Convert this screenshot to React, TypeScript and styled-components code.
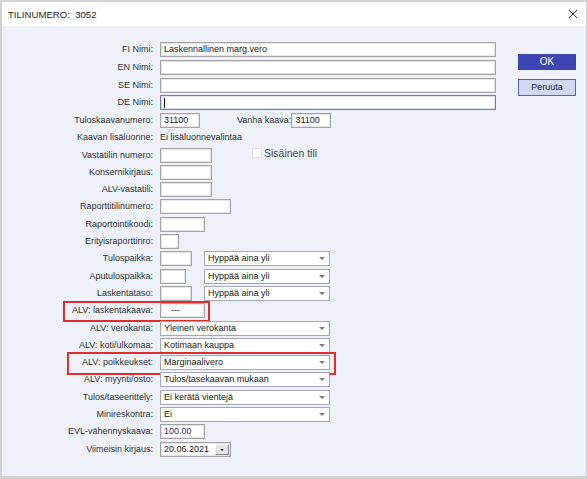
import React from 'react';
import styled, { createGlobalStyle } from 'styled-components';

const GlobalStyle = createGlobalStyle`
  html, body {
    margin: 0;
    padding: 0;
    background: #d2d2d2;
  }
  body {
    font-family: "Liberation Sans", Arial, sans-serif;
  }
`;

const Window = styled.div`
  margin: 2px 0 0 2px;
  width: 584px;
  height: 474px;
  background: #eef1fa;
  display: flex;
  flex-direction: column;
  overflow: hidden;
`;

const TitleBar = styled.div`
  height: 24px;
  flex-shrink: 0;
  background: #ffffff;
  display: flex;
  align-items: center;
  justify-content: space-between;
  padding: 0 8px 0 6px;
  font-size: 9.6px;
  color: #1e1e1e;
`;

const Close = styled.svg`
  width: 10px;
  height: 10px;
`;

const Content = styled.div`
  display: flex;
  align-items: flex-start;
  padding-top: 16px;
`;

const Form = styled.div`
  width: 500px;
  display: flex;
  flex-direction: column;
`;

const Row = styled.div<{ $tall?: boolean }>`
  position: relative;
  display: flex;
  align-items: flex-start;
  height: ${({ $tall }) => ($tall ? 17.75 : 17.3)}px;
`;

const Highlight = styled.div<{ $left: number; $top: number; $width: number; $height: number }>`
  position: absolute;
  left: ${({ $left }) => $left}px;
  top: ${({ $top }) => $top}px;
  width: ${({ $width }) => $width}px;
  height: ${({ $height }) => $height}px;
  border: 2px solid #e42a2a;
  box-sizing: border-box;
  pointer-events: none;
`;

const Label = styled.div`
  width: 151px;
  margin-right: 7px;
  flex-shrink: 0;
  text-align: right;
  font-size: 9px;
  line-height: 15px;
  color: #333;
  white-space: nowrap;
`;

const SideLabel = styled(Label)`
  width: auto;
  margin: 0 0 0 37px;
`;

const Text = styled.div`
  font-size: 9px;
  line-height: 15px;
  color: #2e2e2e;
  white-space: nowrap;
`;

const Field = styled.div<{ $w: number; $focus?: boolean; $pad?: number; $color?: string }>`
  position: relative;
  width: ${({ $w }) => $w}px;
  height: 15px;
  box-sizing: border-box;
  flex-shrink: 0;
  background: #fff;
  border: 1px solid ${({ $focus }) => ($focus ? '#7379b6' : '#a3a3a3')};
  box-shadow: inset 0 0 0 1px ${({ $focus }) => ($focus ? '#dfe2f4' : '#e6e6e6')};
  padding-left: ${({ $pad }) => $pad ?? 3}px;
  font-size: 9px;
  line-height: 13px;
  color: ${({ $color }) => $color ?? '#1a1a1a'};
  white-space: nowrap;
  overflow: hidden;
`;

const Caret = styled.span`
  position: absolute;
  left: 3px;
  top: 2px;
  width: 1px;
  height: 10px;
  background: #000;
`;

const Select = styled.div<{ $w: number; $gap?: number }>`
  position: relative;
  width: ${({ $w }) => $w}px;
  height: 15px;
  margin-left: ${({ $gap }) => $gap ?? 0}px;
  box-sizing: border-box;
  flex-shrink: 0;
  background: #fff;
  border: 1px solid #a4a6bd;
  padding-left: 3px;
  font-size: 9px;
  line-height: 13px;
  color: #1a1a1a;
  white-space: nowrap;

  &::after {
    content: '';
    position: absolute;
    right: 4px;
    top: 5px;
    border-left: 3.5px solid transparent;
    border-right: 3.5px solid transparent;
    border-top: 3.5px solid #7a7a7a;
  }
`;

const DateButton = styled.div`
  position: absolute;
  right: 1px;
  top: 1px;
  width: 14px;
  height: 11px;
  box-sizing: border-box;
  background: #e4e4e4;
  border: 1px solid;
  border-color: #f8f8f8 #8a8a8a #8a8a8a #f8f8f8;

  &::after {
    content: '';
    position: absolute;
    left: 4px;
    top: 4px;
    border-left: 2.5px solid transparent;
    border-right: 2.5px solid transparent;
    border-top: 2.5px solid #111;
  }
`;

const CheckLabel = styled.label`
  display: flex;
  align-items: center;
  gap: 2px;
  margin: -2px 0 0 40px;
  font-size: 10.5px;
  line-height: 14px;
  color: #4a4a55;
`;

const CheckBox = styled.span`
  width: 10px;
  height: 10px;
  box-sizing: border-box;
  background: #fff;
  border: 1px solid #e2e2e8;
`;

const Buttons = styled.div`
  margin: 12px 0 0 16px;
  display: flex;
  flex-direction: column;
  gap: 9px;
`;

const Button = styled.button<{ $primary?: boolean }>`
  width: 58px;
  height: ${({ $primary }) => ($primary ? 16 : 17)}px;
  padding: 0;
  font-family: "Liberation Sans", Arial, sans-serif;
  font-size: ${({ $primary }) => ($primary ? 10 : 9)}px;
  line-height: 1;
  border: 1px solid ${({ $primary }) => ($primary ? '#3b43ad' : '#5960b9')};
  background: ${({ $primary }) => ($primary ? '#3d45b2' : '#d3d8f1')};
  color: ${({ $primary }) => ($primary ? '#ffffff' : '#1f1f2e')};
`;

export default function App() {
  return (
    <>
      <GlobalStyle />
      <Window>
        <TitleBar>
          <span>TILINUMERO:&nbsp; 3052</span>
          <Close viewBox="0 0 10 10">
            <path d="M1 1 L9 9 M9 1 L1 9" stroke="#333" strokeWidth="1" fill="none" />
          </Close>
        </TitleBar>
        <Content>
          <Form>
            <Row $tall>
              <Label>FI Nimi:</Label>
              <Field $w={336}>Laskennallinen marg.vero</Field>
            </Row>
            <Row $tall>
              <Label>EN Nimi:</Label>
              <Field $w={336} />
            </Row>
            <Row $tall>
              <Label>SE Nimi:</Label>
              <Field $w={336} />
            </Row>
            <Row $tall>
              <Label>DE Nimi:</Label>
              <Field $w={336} $focus>
                <Caret />
              </Field>
            </Row>
            <Row>
              <Label>Tuloskaavanumero:</Label>
              <Field $w={40}>31100</Field>
              <SideLabel>Vanha kaava:</SideLabel>
              <Field $w={40}>31100</Field>
            </Row>
            <Row>
              <Label>Kaavan lisäluonne:</Label>
              <Text>Ei lisäluonnevalintaa</Text>
            </Row>
            <Row>
              <Label>Vastatilin numero:</Label>
              <Field $w={52} />
              <CheckLabel>
                <CheckBox />
                Sisäinen tili
              </CheckLabel>
            </Row>
            <Row>
              <Label>Konsernikirjaus:</Label>
              <Field $w={52} />
            </Row>
            <Row>
              <Label>ALV-vastatili:</Label>
              <Field $w={52} />
            </Row>
            <Row>
              <Label>Raporttitilinumero:</Label>
              <Field $w={71} />
            </Row>
            <Row>
              <Label>Raportointikoodi:</Label>
              <Field $w={45} />
            </Row>
            <Row>
              <Label>Erityisraporttinro:</Label>
              <Field $w={19} />
            </Row>
            <Row>
              <Label>Tulospaikka:</Label>
              <Field $w={32} />
              <Select $w={126} $gap={12}>Hyppää aina yli</Select>
            </Row>
            <Row>
              <Label>Aputulospaikka:</Label>
              <Field $w={26} />
              <Select $w={126} $gap={18}>Hyppää aina yli</Select>
            </Row>
            <Row>
              <Label>Laskentataso:</Label>
              <Field $w={32} />
              <Select $w={126} $gap={12}>Hyppää aina yli</Select>
            </Row>
            <Row>
              <Highlight $left={61} $top={-2.3} $width={147} $height={20.7} />
              <Label>ALV: laskentakaava:</Label>
              <Field $w={45} $pad={10}>---</Field>
            </Row>
            <Row>
              <Label>ALV: verokanta:</Label>
              <Select $w={170}>Yleinen verokanta</Select>
            </Row>
            <Row>
              <Label>ALV: koti/ulkomaa:</Label>
              <Select $w={170}>Kotimaan kauppa</Select>
            </Row>
            <Row>
              <Highlight $left={65} $top={-3.2} $width={269} $height={23} />
              <Label>ALV: poikkeukset:</Label>
              <Select $w={170}>Marginaalivero</Select>
            </Row>
            <Row>
              <Label>ALV: myynti/osto:</Label>
              <Select $w={170}>Tulos/tasekaavan mukaan</Select>
            </Row>
            <Row>
              <Label>Tulos/taseerittely:</Label>
              <Select $w={170}>Ei kerätä vientejä</Select>
            </Row>
            <Row>
              <Label>Minireskontra:</Label>
              <Select $w={170}>Ei</Select>
            </Row>
            <Row>
              <Label>EVL-vähennyskaava:</Label>
              <Field $w={45} $color="#3b2a5e">100.00</Field>
            </Row>
            <Row>
              <Label>Viimeisin kirjaus:</Label>
              <Field $w={71}>
                20.06.2021
                <DateButton />
              </Field>
            </Row>
          </Form>
          <Buttons>
            <Button $primary>OK</Button>
            <Button>Peruuta</Button>
          </Buttons>
        </Content>
      </Window>
    </>
  );
}
